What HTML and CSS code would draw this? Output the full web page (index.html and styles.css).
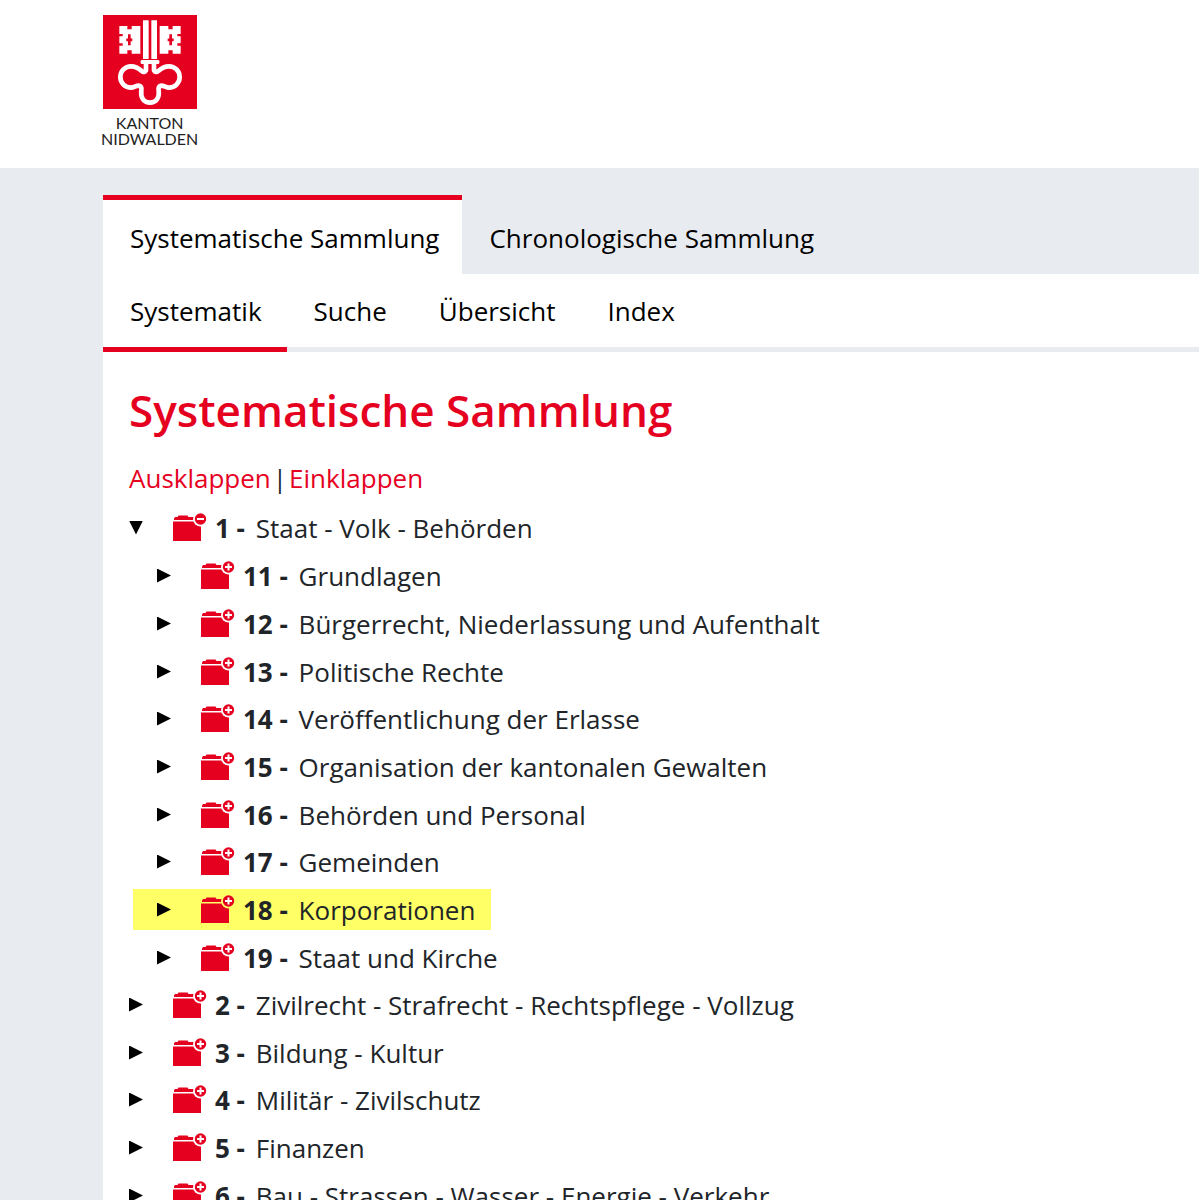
FILE: index.html
```html
<!DOCTYPE html>
<html lang="de">
<head>
<meta charset="utf-8">
<title>Systematische Sammlung</title>
<link rel="stylesheet" href="styles.css">
</head>
<body>
<svg class="sprite" aria-hidden="true">
  <symbol id="folder-plus" viewBox="0 0 36 30">
    <path d="M1 7V5.500l1-1.500h2.500l1-1.500h9l1 1.500h9.500v3zM0 8.500h28V28H0z" fill="#e6001f"/>
    <circle class="halo" cx="27.500" cy="6" r="7.500"/>
    <circle cx="27.500" cy="6" r="5.700" fill="#e6001f"/>
    <path d="M27.500 2.500v7M24 6h7" stroke="#fff" stroke-width="2"/>
  </symbol>
  <symbol id="folder-minus" viewBox="0 0 36 30">
    <path d="M1 7V5.500l1-1.500h2.500l1-1.500h9l1 1.500h9.500v3zM0 8.500h28V28H0z" fill="#e6001f"/>
    <circle class="halo" cx="27.500" cy="6" r="7.500"/>
    <circle cx="27.500" cy="6" r="5.700" fill="#e6001f"/>
    <path d="M24 6h7" stroke="#fff" stroke-width="2"/>
  </symbol>
</svg>
<header class="header">
  <a class="logo" href="#">
    <svg class="crest" viewBox="24 22 282 282" aria-hidden="true">
      <path fill="#e6001f" d="M24 22h282v282H24z"/>
      <path fill="#fff" d="M144 38h17v116h-17zM169 38h17v116h-17z"/>
      <rect x="137" y="157" width="56" height="12" rx="4" fill="#fff"/>
      <path fill="#fff" d="M73 55h24v10h13V55h26v83h-26v-10H97v10H73v-24h10v-7H73V86h10v-7H73zM257 55h-24v10h-13V55h-26v83h26v-10h13v10h24v-24h-10v-7h10V86h-10v-7h10z"/>
      <path stroke="#e6001f" stroke-width="8" d="M103 80v33M94 96.500h18M227 80v33M218 96.500h18"/>
      <path fill="none" stroke="#fff" stroke-width="14" stroke-linejoin="round" d="M153 168v20q-5 9-13 2c-10-9-20-14-32-14a32 32 0 1 0 0 64c9 0 14-6 23-6q10 1 8 14c-3 22 7 37 26 37s29-15 26-37q-2-13 8-14c9 0 14 6 23 6a32 32 0 1 0 0-64c-12 0-22 5-32 14q-8 7-13-2v-20"/>
    </svg>
    <span class="logo-text">KANTON<br>NIDWALDEN</span>
  </a>
</header>
<div class="page">
  <nav class="tabs" aria-label="Sammlungen">
    <a class="tab tab-active" href="#">Systematische Sammlung</a>
    <a class="tab" href="#">Chronologische Sammlung</a>
  </nav>
  <main class="panel">
    <nav class="subtabs" aria-label="Ansichten">
      <a class="subtab subtab-active" href="#">Systematik</a>
      <a class="subtab" href="#">Suche</a>
      <a class="subtab" href="#">Übersicht</a>
      <a class="subtab" href="#">Index</a>
    </nav>
    <div class="content">
      <h1 class="title">Systematische Sammlung</h1>
      <p class="actions"><a href="#">Ausklappen</a><span>|</span><a href="#">Einklappen</a></p>
      <ul class="tree">
        <li><div class="row"><button class="toggle toggle-open" aria-label="Zuklappen"></button><svg class="folder"><use href="#folder-minus"/></svg><span><b>1 -</b> Staat - Volk - Behörden</span></div>
          <ul class="subtree">
            <li><div class="row"><button class="toggle" aria-label="Aufklappen"></button><svg class="folder"><use href="#folder-plus"/></svg><span><b>11 -</b> Grundlagen</span></div></li>
            <li><div class="row"><button class="toggle" aria-label="Aufklappen"></button><svg class="folder"><use href="#folder-plus"/></svg><span><b>12 -</b> Bürgerrecht, Niederlassung und Aufenthalt</span></div></li>
            <li><div class="row"><button class="toggle" aria-label="Aufklappen"></button><svg class="folder"><use href="#folder-plus"/></svg><span><b>13 -</b> Politische Rechte</span></div></li>
            <li><div class="row"><button class="toggle" aria-label="Aufklappen"></button><svg class="folder"><use href="#folder-plus"/></svg><span><b>14 -</b> Veröffentlichung der Erlasse</span></div></li>
            <li><div class="row"><button class="toggle" aria-label="Aufklappen"></button><svg class="folder"><use href="#folder-plus"/></svg><span><b>15 -</b> Organisation der kantonalen Gewalten</span></div></li>
            <li><div class="row"><button class="toggle" aria-label="Aufklappen"></button><svg class="folder"><use href="#folder-plus"/></svg><span><b>16 -</b> Behörden und Personal</span></div></li>
            <li><div class="row"><button class="toggle" aria-label="Aufklappen"></button><svg class="folder"><use href="#folder-plus"/></svg><span><b>17 -</b> Gemeinden</span></div></li>
            <li><div class="row row-marked"><button class="toggle" aria-label="Aufklappen"></button><svg class="folder"><use href="#folder-plus"/></svg><span><b>18 -</b> Korporationen</span></div></li>
            <li><div class="row"><button class="toggle" aria-label="Aufklappen"></button><svg class="folder"><use href="#folder-plus"/></svg><span><b>19 -</b> Staat und Kirche</span></div></li>
          </ul>
        </li>
        <li><div class="row"><button class="toggle" aria-label="Aufklappen"></button><svg class="folder"><use href="#folder-plus"/></svg><span><b>2 -</b> Zivilrecht - Strafrecht - Rechtspflege - Vollzug</span></div></li>
        <li><div class="row"><button class="toggle" aria-label="Aufklappen"></button><svg class="folder"><use href="#folder-plus"/></svg><span><b>3 -</b> Bildung - Kultur</span></div></li>
        <li><div class="row"><button class="toggle" aria-label="Aufklappen"></button><svg class="folder"><use href="#folder-plus"/></svg><span><b>4 -</b> Militär - Zivilschutz</span></div></li>
        <li><div class="row"><button class="toggle" aria-label="Aufklappen"></button><svg class="folder"><use href="#folder-plus"/></svg><span><b>5 -</b> Finanzen</span></div></li>
        <li><div class="row"><button class="toggle" aria-label="Aufklappen"></button><svg class="folder"><use href="#folder-plus"/></svg><span><b>6 -</b> Bau - Strassen - Wasser - Energie - Verkehr</span></div></li>
      </ul>
    </div>
  </main>
</div>
</body>
</html>
```
FILE: styles.css
```css
* { box-sizing: border-box; }
body {
  display: flex;
  flex-direction: column;
  height: 100vh;
  margin: 0;
  overflow: hidden;
  background: #e8ebf0;
  color: #212529;
  font: 26px/40px "Open Sans", "Noto Sans", sans-serif;
}
a { color: #e6001f; text-decoration: none; }
ul { margin: 0; padding: 0; list-style: none; }
.sprite { display: none; }

.header { flex: none; padding: 15px 0 21px 101px; background: #fff; }
.logo { display: flex; flex-direction: column; align-items: center; width: fit-content; gap: 6px; color: #222; }
.crest { width: 94px; height: 94px; }
.logo-text { font: 16px/16px Lato, sans-serif; text-align: center; }

.page { flex: 1; display: flex; flex-direction: column; min-height: 0; padding: 27px 0 0 103px; }
.tabs, .subtabs { flex: none; display: flex; }
.tab, .subtab { color: #000; white-space: nowrap; line-height: 38px; }
.tab { padding: 19px 23px 17px 27px; border-top: 5px solid transparent; }
.tab-active { background: #fff; border-color: #e6001f; }
.panel { flex: 1; min-height: 0; background: #fff; }
.subtabs { border-bottom: 5px solid #e8ebf0; }
.subtab { margin-bottom: -5px; padding: 18px 25px 17px 27px; border-bottom: 5px solid transparent; }
.subtab-active { border-color: #e6001f; }

.content { padding: 26px 26px 0; }
.title { margin: 0; color: #e6001f; font-size: 44px; line-height: 64px; font-weight: 600; }
.actions { display: flex; gap: 2px; margin: 16px 0 5px; }

.tree, .subtree { display: flex; flex-direction: column; }
.row { display: flex; align-items: center; width: fit-content; height: 41px; margin: 4px 0 3px; white-space: nowrap; }
.tree li:nth-child(3n) > .row { margin-bottom: 2px; }
.subtree { padding-left: 4px; }
.subtree .row { padding: 0 16px 0 24px; }
.row-marked { background: #ff6; }
.row-marked .folder { --halo: #ff6; }
.toggle { width: 14px; height: 14px; margin-right: 30px; padding: 0; border: 0; background: #000; clip-path: polygon(0 0, 100% 50%, 0 100%); }
.toggle-open { clip-path: polygon(0 0, 100% 0, 50% 100%); }
.folder { width: 36px; height: 30px; margin-right: 6px; }
.halo { fill: var(--halo, #fff); }
b { margin-right: 4px; font-weight: 700; }
```
